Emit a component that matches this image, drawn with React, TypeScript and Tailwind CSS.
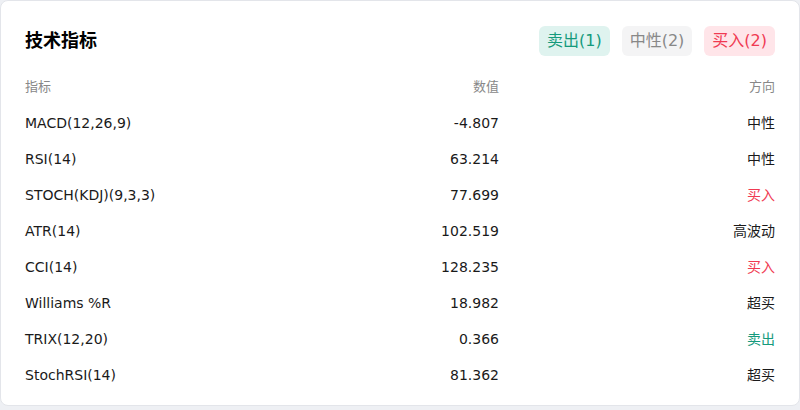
const rows = [
  { name: 'MACD(12,26,9)', value: '-4.807', dir: '中性', tone: 'n' },
  { name: 'RSI(14)', value: '63.214', dir: '中性', tone: 'n' },
  { name: 'STOCH(KDJ)(9,3,3)', value: '77.699', dir: '买入', tone: 'buy' },
  { name: 'ATR(14)', value: '102.519', dir: '高波动', tone: 'n' },
  { name: 'CCI(14)', value: '128.235', dir: '买入', tone: 'buy' },
  { name: 'Williams %R', value: '18.982', dir: '超买', tone: 'n' },
  { name: 'TRIX(12,20)', value: '0.366', dir: '卖出', tone: 'sell' },
  { name: 'StochRSI(14)', value: '81.362', dir: '超买', tone: 'n' },
]

const toneClass: Record<string, string> = {
  n: 'text-[#1a1a1a]',
  buy: 'text-[#f03a52]',
  sell: 'text-[#159a7c]',
}

export default function App() {
  return (
    <div className="h-[410px] w-[800px] bg-[#eef0f4] font-['DejaVu_Sans','Noto_Sans_CJK_SC',sans-serif]">
      <div className="h-[406px] rounded-lg border border-[#e3e5ea] bg-white px-6 pt-[25px]">
        <div className="mb-[13px] flex h-[30px] items-center justify-between">
          <h2 className="text-lg font-bold text-black">技术指标</h2>
          <div className="flex gap-3 text-base">
            <span className="flex h-[30px] items-center rounded-md bg-[#dff3ef] px-2 text-[#159a7c]">卖出(1)</span>
            <span className="flex h-[30px] items-center rounded-md bg-[#f4f4f5] px-2 text-[#888]">中性(2)</span>
            <span className="flex h-[30px] items-center rounded-md bg-[#ffe5e9] px-2 text-[#f03a52]">买入(2)</span>
          </div>
        </div>

        <div className="grid h-9 grid-cols-[1fr_1fr_276px] items-center text-[13px] text-[#888]">
          <span>指标</span>
          <span className="text-right">数值</span>
          <span className="text-right">方向</span>
        </div>

        {rows.map((r) => (
          <div key={r.name} className="grid h-9 grid-cols-[1fr_1fr_276px] items-center text-sm text-[#1a1a1a]">
            <span>{r.name}</span>
            <span className="text-right">{r.value}</span>
            <span className={`text-right ${toneClass[r.tone]}`}>{r.dir}</span>
          </div>
        ))}
      </div>
    </div>
  )
}
